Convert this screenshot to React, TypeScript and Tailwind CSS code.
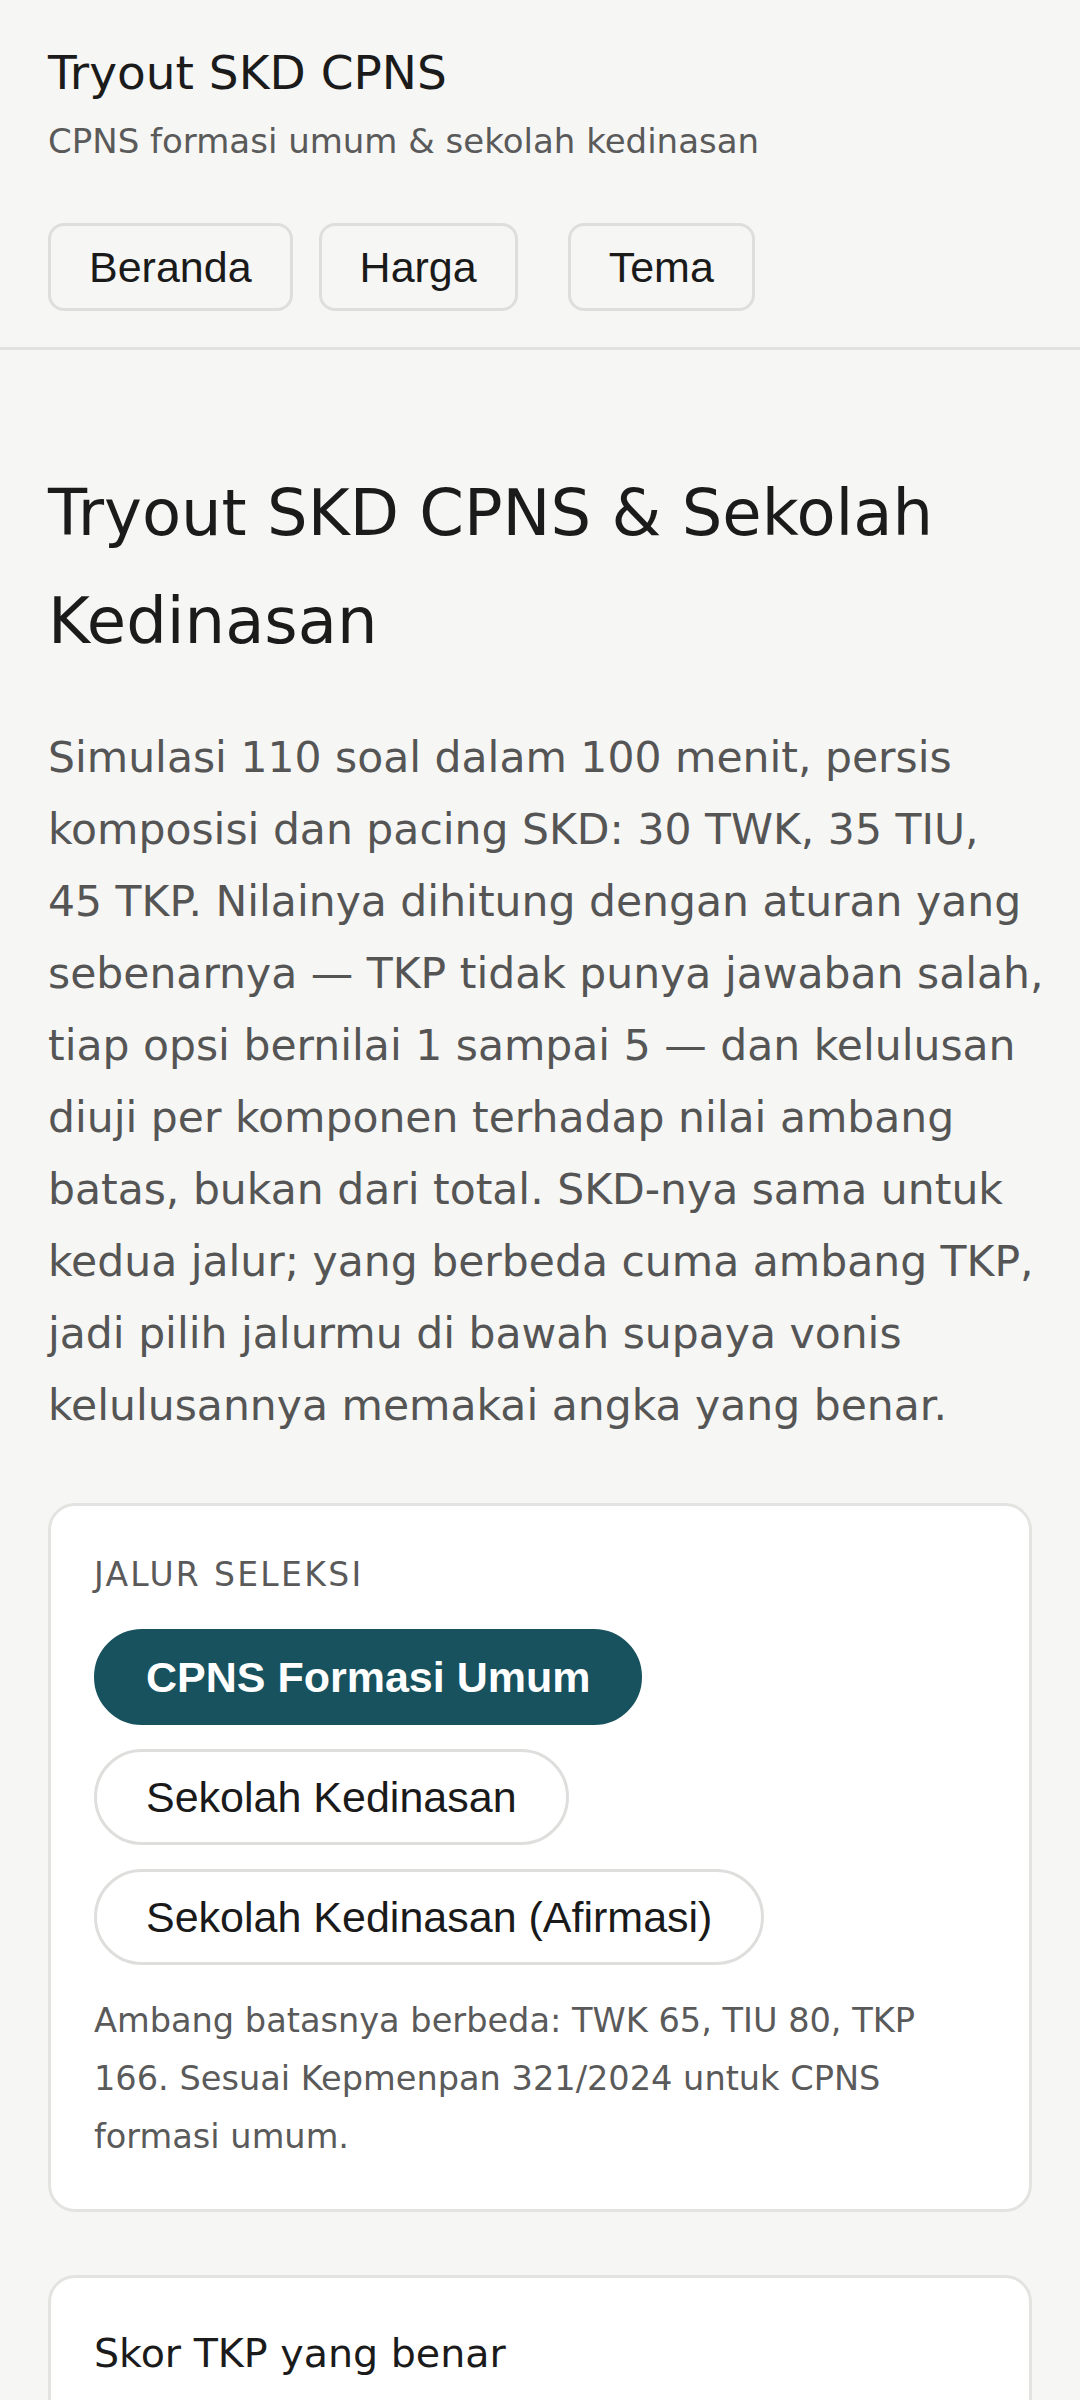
const tracks = [
  { label: "CPNS Formasi Umum", active: true },
  { label: "Sekolah Kedinasan", active: false },
  { label: "Sekolah Kedinasan (Afirmasi)", active: false },
];

const introLines = [
  "Simulasi 110 soal dalam 100 menit, persis",
  "komposisi dan pacing SKD: 30 TWK, 35 TIU,",
  "45 TKP. Nilainya dihitung dengan aturan yang",
  "sebenarnya — TKP tidak punya jawaban salah,",
  "tiap opsi bernilai 1 sampai 5 — dan kelulusan",
  "diuji per komponen terhadap nilai ambang",
  "batas, bukan dari total. SKD-nya sama untuk",
  "kedua jalur; yang berbeda cuma ambang TKP,",
  "jadi pilih jalurmu di bawah supaya vonis",
  "kelulusannya memakai angka yang benar.",
];

function NavButton({ children, className = "" }: { children: string; className?: string }) {
  return (
    <button
      className={`flex h-[88px] items-center rounded-[16px] border-[3px] border-[#dededc] bg-[#f6f6f4] px-[38px] font-['Liberation_Sans',Arial,sans-serif] text-[43px] text-[#1a1a1a] ${className}`}
    >
      {children}
    </button>
  );
}

export default function App() {
  return (
    <div className="min-h-screen bg-[#f6f6f4] font-['DejaVu_Sans',sans-serif] text-[#1b1b1b]">
      {/* Header */}
      <header className="border-b-[3px] border-[#e2e2e0] px-[48px] pt-[45px] pb-[36px]">
        <div className="text-[47px] leading-[56px]">Tryout SKD CPNS</div>
        <div className="mt-[16px] text-[34px] leading-[48px] text-[#5a5a5a]">
          CPNS formasi umum &amp; sekolah kedinasan
        </div>
        <nav className="mt-[58px] flex gap-[26px]">
          <NavButton>Beranda</NavButton>
          <NavButton>Harga</NavButton>
          <NavButton className="ml-[24px]">Tema</NavButton>
        </nav>
      </header>

      <main className="px-[48px] pt-[109px] pb-[80px]">
        <h1 className="text-[64px] leading-[108px] font-normal">Tryout SKD CPNS &amp; Sekolah Kedinasan</h1>
        <p className="mt-[47px] whitespace-nowrap text-[42.5px] leading-[72px] text-[#555555]">
          {introLines.map((line, i) => (
            <span key={i} className="block">
              {line}
            </span>
          ))}
        </p>

        {/* Jalur seleksi */}
        <section className="mt-[61px] rounded-[27px] border-[3px] border-[#e3e3e1] bg-white p-[43px]">
          <div className="text-[33px] leading-[52px] tracking-[0.07em] text-[#5a5a5a]">JALUR SELEKSI</div>
          <div className="mt-[28px] flex flex-wrap gap-[24px]">
            {tracks.map((t) => (
              <button
                key={t.label}
                className={`flex h-[96px] items-center rounded-full border-[3px] px-[49px] font-['Liberation_Sans',Arial,sans-serif] text-[43px] ${
                  t.active
                    ? "border-[#17525e] bg-[#17525e] font-bold text-white"
                    : "border-[#dededc] bg-white text-[#1a1a1a]"
                }`}
              >
                {t.label}
              </button>
            ))}
          </div>
          <p className="mt-[27px] text-[33.6px] leading-[58px] text-[#5a5a5a]">
            Ambang batasnya berbeda: TWK 65, TIU 80, TKP 166. Sesuai Kepmenpan 321/2024 untuk CPNS formasi umum.
          </p>
        </section>

        {/* Skor TKP */}
        <section className="mt-[63px] rounded-[27px] border-[3px] border-[#e3e3e1] bg-white p-[43px]">
          <h2 className="text-[39.6px] leading-[64px] font-normal">Skor TKP yang benar</h2>
          <p className="mt-[24px] text-[33.6px] leading-[58px] text-[#5a5a5a]">
            Setiap soal TKP punya lima opsi dengan bobot 1 sampai 5. Tidak ada jawaban yang bernilai nol, jadi
            strategi terbaik adalah memilih opsi yang paling sesuai dengan sikap kerja seorang ASN.
          </p>
        </section>
      </main>
    </div>
  );
}
